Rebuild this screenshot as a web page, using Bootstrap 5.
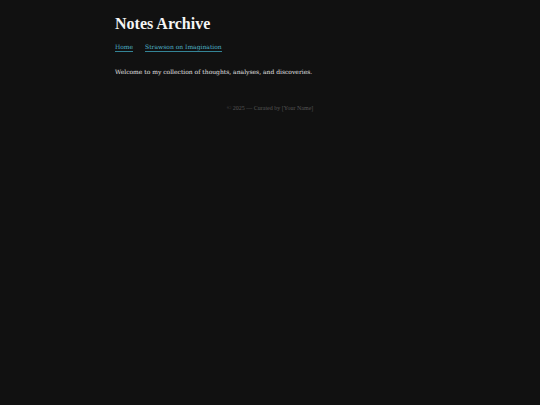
<!DOCTYPE html>
<html lang="en" data-bs-theme="dark">
<head>
<meta charset="utf-8">
<meta name="viewport" content="width=device-width, initial-scale=1">
<title>Notes Archive</title>
<link href="https://cdn.jsdelivr.net/npm/bootstrap@5.3.0/dist/css/bootstrap.min.css" rel="stylesheet">
<style>
  body { background: #111; color: #e0e0e0; font-family: Georgia, "DejaVu Serif", serif; font-size: 6px; line-height: 12px; }
  .page { max-width: 342px; padding-top: 15px; }
  .site-title { font-family: Georgia, "Liberation Serif", serif; font-size: 16px; line-height: 18px; margin-bottom: 9px; color: #f5f5f5; }
  .site-nav { gap: 12px; margin-bottom: 14px; }
  .site-nav a { color: #4fb3c8; border-bottom: 1px solid #348496; line-height: 9px; }
  .site-footer { font-family: Georgia, "Liberation Serif", serif; margin-top: 24px; color: #555; }
</style>
</head>
<body>
<div class="page container px-3">
  <header>
    <h1 class="site-title fw-bold">Notes Archive</h1>
    <nav class="site-nav d-flex flex-wrap">
      <a class="text-decoration-none" href="#">Home</a>
      <a class="text-decoration-none" href="#">Strawson on Imagination</a>
    </nav>
  </header>
  <main>
    <p class="mb-0">Welcome to my collection of thoughts, analyses, and discoveries.</p>
  </main>
  <footer class="site-footer text-center">© 2025 — Curated by [Your Name]</footer>
</div>
<script src="https://cdn.jsdelivr.net/npm/bootstrap@5.3.0/dist/js/bootstrap.bundle.min.js"></script>
</body>
</html>
